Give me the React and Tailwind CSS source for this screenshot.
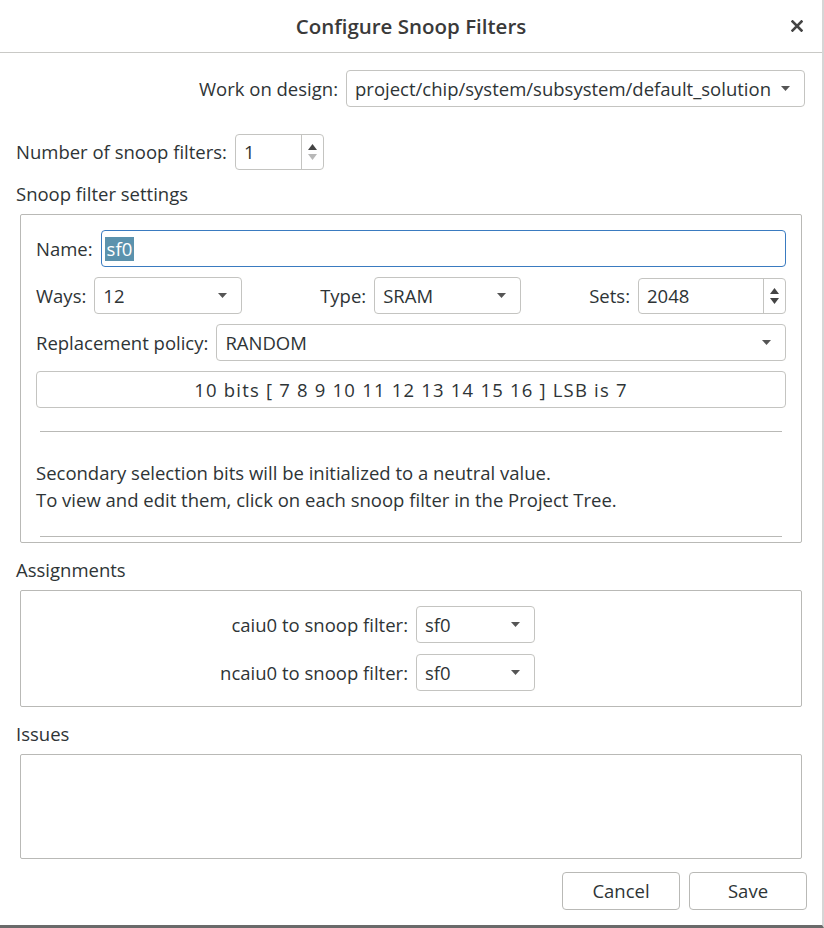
import React from 'react';

const font = { fontFamily: '"Open Sans", "Noto Sans", sans-serif' };

function Caret() {
  return (
    <svg width="9" height="5" viewBox="0 0 9 5" className="shrink-0">
      <path d="M0 0 L9 0 L4.5 5 Z" fill="#555" />
    </svg>
  );
}

function Select({ value, className = '' }) {
  return (
    <div className={`flex items-center justify-between border border-[#c4c4c1] rounded-[4px] bg-white pl-2 pr-[14px] h-[37px] text-[#2e3436] ${className}`}>
      <span className="truncate">{value}</span>
      <Caret />
    </div>
  );
}

function Spin({ value, className = '', downDisabled = false }) {
  return (
    <div className={`flex items-stretch border border-[#c4c4c1] rounded-[4px] bg-white h-[36px] text-[#2e3436] ${className}`}>
      <span className="flex-1 flex items-center pl-2">{value}</span>
      <div className="w-[22px] border-l border-[#c4c4c1] flex flex-col items-center justify-center gap-[4px]">
        <svg width="9" height="6" viewBox="0 0 9 6"><path d="M0 6 L9 6 L4.5 0 Z" fill="#444" /></svg>
        <svg width="9" height="6" viewBox="0 0 9 6"><path d="M0 0 L9 0 L4.5 6 Z" fill={downDisabled ? '#b8b8b8' : '#444'} /></svg>
      </div>
    </div>
  );
}

function Frame({ children, className = '' }) {
  return (
    <div className={`mx-[20px] border border-[#b9b9b6] rounded-[2px] ${className}`}>
      {children}
    </div>
  );
}

function Button({ children }) {
  return (
    <button className="w-[118px] h-[38px] border border-[#b9b9b6] rounded-[4px] bg-white text-[#2e3436]">
      {children}
    </button>
  );
}

export default function App() {
  return (
    <div style={font} className="w-[824px] h-[928px] bg-white text-[#2e3436] text-[18.5px] flex flex-col border-r-2 border-r-[#d6d6d6] border-b-[3px] border-b-[#6a6a6a] overflow-hidden">
      <div className="h-[53px] shrink-0 border-b border-[#c9c9c6] flex items-center justify-center relative">
        <span className="text-[20.5px] font-semibold text-[#3a3a3a]">Configure Snoop Filters</span>
        <span className="absolute right-[19px] top-[20px]">
          <svg width="12" height="12" viewBox="0 0 12 12">
            <path d="M1.5 1.5 L10.5 10.5 M10.5 1.5 L1.5 10.5" stroke="#444" strokeWidth="2.6" strokeLinecap="square" />
          </svg>
        </span>
      </div>

      <div className="flex items-center justify-end gap-[8px] mt-[17px] pr-[17px]">
        <span>Work on design:</span>
        <Select value="project/chip/system/subsystem/default_solution" className="w-[459px]" />
      </div>

      <div className="flex items-center gap-[8px] mt-[27px] pl-[16px]">
        <span>Number of snoop filters:</span>
        <Spin value="1" className="w-[89px]" downDisabled />
      </div>

      <div className="pl-[16px] mt-[12px] leading-[24px]">Snoop filter settings</div>
      <Frame className="mt-[8px] h-[329px] flex flex-col px-[15px] pt-[15px]">
        <div className="flex items-center gap-[8px]">
          <span>Name:</span>
          <div className="flex-1 h-[37px] border border-[#3a7bc0] rounded-[4px] flex items-center pl-[3px]">
            <span className="bg-[#5b92ad] text-white px-[2px] leading-[24px]">sf0</span>
          </div>
        </div>
        <div className="flex items-center mt-[10px]">
          <span>Ways:</span>
          <Select value="12" className="w-[148px] ml-[8px]" />
          <span className="ml-auto">Type:</span>
          <Select value="SRAM" className="w-[147px] ml-[8px]" />
          <span className="ml-[68px]">Sets:</span>
          <Spin value="2048" className="w-[148px] ml-[8px]" />
        </div>
        <div className="flex items-center gap-[8px] mt-[10px]">
          <span>Replacement policy:</span>
          <Select value="RANDOM" className="flex-1" />
        </div>
        <div className="mt-[10px] h-[37px] border border-[#c4c4c1] rounded-[4px] flex items-center justify-center tracking-[1.2px]">
          10 bits [ 7 8 9 10 11 12 13 14 15 16 ] LSB is 7
        </div>
        <div className="mx-[4px] mt-[23px] border-t border-[#b9b9b6]" />
        <div className="mt-[27px] leading-[27px]">
          <div>Secondary selection bits will be initialized to a neutral value.</div>
          <div>To view and edit them, click on each snoop filter in the Project Tree.</div>
        </div>
        <div className="mx-[4px] mt-auto mb-[5px] border-t border-[#b9b9b6]" />
      </Frame>

      <div className="pl-[16px] mt-[15px] leading-[24px]">Assignments</div>
      <Frame className="mt-[8px] h-[117px] flex flex-col justify-center gap-[11px]">
        <div className="flex items-center justify-end gap-[8px] w-[514px]">
          <span className="text-right">caiu0 to snoop filter:</span>
          <Select value="sf0" className="w-[119px]" />
        </div>
        <div className="flex items-center justify-end gap-[8px] w-[514px]">
          <span className="text-right">ncaiu0 to snoop filter:</span>
          <Select value="sf0" className="w-[119px]" />
        </div>
      </Frame>

      <div className="pl-[16px] mt-[15px] leading-[24px]">Issues</div>
      <Frame className="mt-[8px] h-[105px]" />

      <div className="flex justify-end gap-[9px] mt-[13px] pr-[15px]">
        <Button>Cancel</Button>
        <Button>Save</Button>
      </div>
    </div>
  );
}
